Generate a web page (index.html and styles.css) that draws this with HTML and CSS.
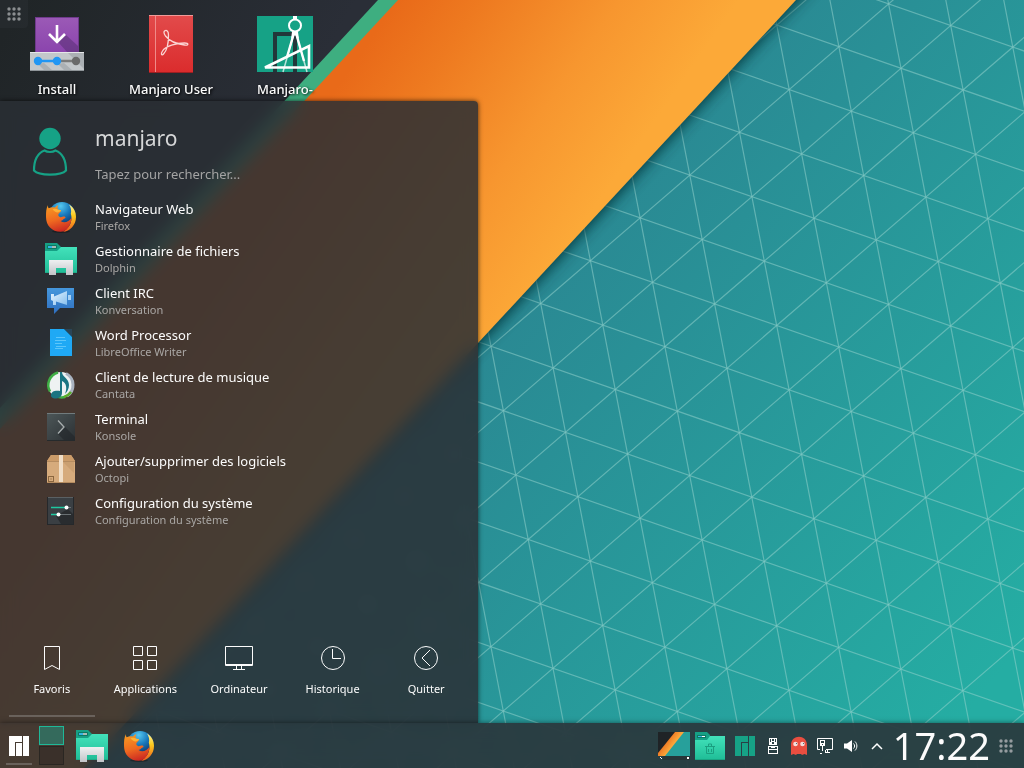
FILE: index.html
```html
<!DOCTYPE html>
<html lang="fr">
<head>
<meta charset="utf-8">
<meta name="viewport" content="width=device-width, initial-scale=1">
<title>Manjaro KDE</title>
<link rel="stylesheet" href="styles.css">
</head>
<body>
<svg class="defs" width="0" height="0" aria-hidden="true">
  <defs>
    <linearGradient id="gFolder" x1="0" y1="0" x2="0" y2="1"><stop offset="0" stop-color="#43e2bb"/><stop offset="1" stop-color="#1fbd97"/></linearGradient>
    <linearGradient id="gPaper" x1="0" y1="0" x2="0" y2="1"><stop offset="0" stop-color="#eef0f1"/><stop offset="1" stop-color="#c2c4c8"/></linearGradient>
    <linearGradient id="gDark" x1="0" y1="0" x2="1" y2="1"><stop offset="0" stop-color="#4c5658"/><stop offset="1" stop-color="#2c3134"/></linearGradient>
    <radialGradient id="gGlobe" cx=".45" cy=".15" r=".8"><stop offset="0" stop-color="#55c8f0"/><stop offset=".45" stop-color="#1878bb"/><stop offset="1" stop-color="#0c2458"/></radialGradient>
    <linearGradient id="gFox" x1=".2" y1="0" x2=".5" y2="1"><stop offset="0" stop-color="#f79a22"/><stop offset=".55" stop-color="#ef6a20"/><stop offset="1" stop-color="#cc2a22"/></linearGradient>
    <linearGradient id="gTail" x1="0" y1="0" x2="0" y2="1"><stop offset="0" stop-color="#fff3a0"/><stop offset=".4" stop-color="#fdcb1e"/><stop offset="1" stop-color="#ee5a1e"/></linearGradient>
    <symbol id="folder" viewBox="0 0 32 32">
      <path fill="#16a085" d="M0 0h12l4 4v5H0z"/>
      <path fill="url(#gFolder)" d="M0 8h12l4-4h16v26H0z"/>
      <path fill="#1fab88" d="M0 29h32v1H0z"/>
      <rect x="2" y="2" width="10" height="4" rx="1" fill="#0d7863"/><rect x="3" y="3" width="4" height="2" fill="#34b6e4"/><rect x="7" y="3" width="4" height="2" fill="#a9bbb4"/>
      <path fill="url(#gPaper)" d="M4 17h24v15h-7v-7h-10v7H4z"/>
    </symbol>
    <symbol id="firefox" viewBox="0 0 32 32">
      <ellipse cx="16" cy="30.500" rx="9" ry="1.500" fill="#000" opacity=".3"/>
      <circle cx="17" cy="14.500" r="13.500" fill="url(#gGlobe)"/>
      <path fill="url(#gTail)" d="M24 3.500c5 3 7 7.500 7 12.500 0 8-6 14.500-13 14.800 5-3 8.500-8 8.500-13.500 0-1.500-.2-3-.7-4.500.9-3 .1-6.500-1.800-9.300z"/>
      <path fill="url(#gFox)" d="M3 4c-.2 1.400.1 2.500.7 3.300C6 6 8 6 10 6.500c1-1.200 2-1.900 3.400-2.300-.9 1.200-1 2.800-.5 4.200 1 .5 2.700.4 3.200.9.200 1.600-2.500 2.800-2.800 4.500-.1 1.200.8 2 2.200 2.400 1.400.3 3.200-1.300 4.700-.3.700.6.300 1.200-.6 1.500-1.600.6-1.900 2.200-4 2.600 3.400 2.600 8.400.8 11.100-3.500C26 24 22 30.800 15.500 30.800 7 30.800 1 24.500 1 16 1 11 1 7.500 3 4z"/>
      <path fill="#ffc23d" d="M7.500 8.500c1.500-1.200 3.500-.8 5.400-.1 1 .5 2.700.4 3.200.9-.5 1.400-2.200 2-3.500 2.300-2-.2-3.600-1.800-5.100-3.100z" opacity=".75"/>
    </symbol>
    <symbol id="manjaro" viewBox="0 0 20 20"><path d="M0 0h13v6H6v14H0zM7 7h6v13H7zM14 0h6v20h-6z"/></symbol>
    <symbol id="grip" viewBox="0 0 14 14"><circle cx="2" cy="2" r="1.700"/><circle cx="7" cy="2" r="1.700"/><circle cx="12" cy="2" r="1.700"/><circle cx="2" cy="7" r="1.700"/><circle cx="7" cy="7" r="1.700"/><circle cx="12" cy="7" r="1.700"/><circle cx="2" cy="12" r="1.700"/><circle cx="7" cy="12" r="1.700"/><circle cx="12" cy="12" r="1.700"/></symbol>
  </defs>
</svg>

<svg class="wallpaper" viewBox="0 0 1024 768" preserveAspectRatio="xMinYMin slice" aria-hidden="true">
  <defs>
    <linearGradient id="wTeal" gradientUnits="userSpaceOnUse" x1="500" y1="330" x2="970" y2="710"><stop offset="0" stop-color="#2a8993"/><stop offset="1" stop-color="#25ada3"/></linearGradient>
    <linearGradient id="wOrange" gradientUnits="userSpaceOnUse" x1="370" y1="40" x2="600" y2="200"><stop offset="0" stop-color="#e96a19"/><stop offset=".25" stop-color="#ee7a20"/><stop offset=".65" stop-color="#f7962f"/><stop offset="1" stop-color="#fca938"/></linearGradient>
    <linearGradient id="wDark" gradientUnits="userSpaceOnUse" x1="0" y1="40" x2="260" y2="180"><stop offset="0" stop-color="#202527"/><stop offset="1" stop-color="#2a2e37"/></linearGradient>
    <filter id="soft" x="-10%" y="-10%" width="120%" height="120%"><feGaussianBlur stdDeviation="7"/></filter>
  </defs>
  <rect width="1024" height="768" fill="url(#wTeal)"/>
  <g transform="matrix(62.1 21.6 12.4 64.4 838.9 46.7)">
    <path class="mesh" d="M-14-6V20M-13-6V20M-12-6V20M-11-6V20M-10-6V20M-9-6V20M-8-6V20M-7-6V20M-6-6V20M-5-6V20M-4-6V20M-3-6V20M-2-6V20M-1-6V20M0-6V20M1-6V20M2-6V20M3-6V20M4-6V20M-16-4H8M-16-3H8M-16-2H8M-16-1H8M-16 0H8M-16 1H8M-16 2H8M-16 3H8M-16 4H8M-16 5H8M-16 6H8M-16 7H8M-16 8H8M-16 9H8M-16 10H8M-16 11H8M-16 12H8M-16 13H8M-16 14H8M-16 15H8"/>
    <path class="mesh" d="M-16 15L6-7M-16 16L6-6M-16 17L6-5M-16 18L6-4M-16 19L6-3M-16 20L6-2M-16 21L6-1M-16 22L6 0M-16 23L6 1M-16 24L6 2M-16 25L6 3M-16 26L6 4M-16 27L6 5M-16 28L6 6M-16 29L6 7M-16 14L6-8"/>
  </g>
  <path d="M-20-20H818L88 768H-20z" fill="#04343a" opacity=".9" filter="url(#soft)"/>
  <path d="M0 0H796L84 768H0z" fill="url(#wOrange)"/>
  <path d="M0 0H398L0 429z" fill="#3eae80"/>
  <path d="M0 0H378L0 408z" fill="url(#wDark)"/>
</svg>

<main class="desktop">
  <button class="toolbox" aria-label="Boîte à outils du bureau"><svg width="14" height="14"><use href="#grip"/></svg></button>
  <ul class="shortcuts">
    <li><a href="#">
      <svg viewBox="0 0 58 58">
        <defs><linearGradient id="iP" x1="0" y1="0" x2="0" y2="1"><stop offset="0" stop-color="#9b59b6"/><stop offset="1" stop-color="#8a44ad"/></linearGradient></defs>
        <rect x="7" y="2" width="44" height="36" fill="#6f3a8c"/><rect x="8" y="3" width="42" height="35" fill="url(#iP)"/>
        <path d="M38 20l12 11v7H40L30 27z" fill="#4b2a66" opacity=".45"/>
        <rect x="2" y="37" width="54" height="19" fill="#c3c7ca"/><path d="M2 37h54v1H2z" fill="#e4e6e8"/><path d="M2 55h54v1H2z" fill="#8f9599"/>
        <path d="M10 49l6 6h8l-8-7zM30 49l6 6h8l-8-7zM40 38l16 16V38z" fill="#7f878b" opacity=".35"/>
        <path d="M29 46h19" stroke="#7b7b7b" stroke-width="2.500"/><path d="M10 46h19" stroke="#2196f3" stroke-width="2.500"/>
        <circle cx="10" cy="46" r="4.200" fill="#2196f3"/><circle cx="29" cy="46" r="4.200" fill="#2196f3"/><circle cx="48" cy="46" r="4.200" fill="#6a6a6a"/>
        <path d="M29 10v16M21 19l8 8 8-8" fill="none" stroke="#fff" stroke-width="2.600"/>
      </svg><span>Install</span></a></li>
    <li><a href="#">
      <svg viewBox="0 0 58 58">
        <defs><linearGradient id="iR" x1="0" y1="0" x2="0" y2="1"><stop offset="0" stop-color="#e24b4b"/><stop offset="1" stop-color="#db2c2d"/></linearGradient></defs>
        <rect x="7" width="44" height="58" fill="#9e1f22"/><rect x="7" width="44" height="57" fill="url(#iR)"/><path d="M7 0h44v1H7z" fill="#f19a98"/><path d="M13.500 1v56" stroke="#f08a88"/>
        <path d="M22.500 16c2-1.500 4 0 4 4 0 6-1 15-5 19-2 2-3 0-1-3 3-5 14-8 22-8 5 0 4 3 0 2-8-1-15-4-19-9-2-3-2-4-1-5z" fill="none" stroke="#fbd5d4" stroke-width="1.300"/>
      </svg><span>Manjaro User</span></a></li>
    <li><a href="#">
      <svg viewBox="0 0 58 58">
        <rect x="1" y="1" width="56" height="56" fill="#16a286"/>
        <path d="M17 17h20v4H21v36h-4zM37 17h4v40h-4z" fill="#22373a"/>
        <path d="M9 52.500L53 31v21.500z" fill="none" stroke="#fff" stroke-width="2.600"/>
        <path d="M39 1v4" stroke="#fff" stroke-width="4"/>
        <circle cx="39" cy="10.500" r="6" fill="none" stroke="#fff" stroke-width="2"/>
        <path d="M38 18L27 57M40 18l11 39" stroke="#fff" stroke-width="1.500" opacity=".7"/>
        <path d="M38 18l-7 24M40 18l8 28" stroke="#fff" stroke-width="2.400"/><path d="M36 17h6l1 7-4-4-4 4z" fill="#fff"/>
      </svg><span>Manjaro-</span></a></li>
  </ul>

  <section class="menu" aria-label="Menu des applications">
    <header class="user">
      <svg class="avatar" viewBox="0 0 40 50"><circle cx="20" cy="11.500" r="10.700" fill="#16a286"/><path d="M14.500 23.500C8 26 4 31 4 43.500c5 5.500 27 5.500 32 0 0-12.500-4-17.500-10.500-20-3 2-8 2-11 0z" fill="none" stroke="#16a286" stroke-width="2.200"/></svg>
      <div class="identity">
        <h1>manjaro</h1>
        <input type="search" aria-label="Rechercher" placeholder="Tapez pour rechercher...">
      </div>
    </header>
    <ul class="apps">
      <li><a href="#"><svg viewBox="0 0 32 32"><use href="#firefox" width="32" height="32"/></svg><span><b>Navigateur Web</b><small>Firefox</small></span></a></li>
      <li><a href="#"><svg viewBox="0 0 32 32"><use href="#folder" width="32" height="32"/></svg><span><b>Gestionnaire de fichiers</b><small>Dolphin</small></span></a></li>
      <li><a href="#"><svg viewBox="0 0 32 32"><defs><linearGradient id="iB" x1="0" y1="0" x2="0" y2="1"><stop offset="0" stop-color="#4597dc"/><stop offset="1" stop-color="#2f6fc0"/></linearGradient><linearGradient id="iH" x1="0" y1="0" x2="1" y2="1"><stop offset="0" stop-color="#e9f5ff"/><stop offset="1" stop-color="#86bfee"/></linearGradient></defs><path d="M2 3h27v20H15l-6 6v-6H2z" fill="url(#iB)"/><path d="M6 9h3v2.500L22 6v14L11 16.500V20H8v-4l-2-1z" fill="url(#iH)"/><path d="M23 10h3v5h-3z" fill="#a9d2f5"/></svg><span><b>Client IRC</b><small>Konversation</small></span></a></li>
      <li><a href="#"><svg viewBox="0 0 32 32"><path d="M5 2h15l7 7v20H5z" fill="#1fa9f5"/><path d="M19 2h8v8z" fill="#2a4658"/><path d="M19 2l8 8" stroke="#16719f"/><path d="M11 10.500h9M10 13.500h11M10 16.500h7M11 19.500h10M10 21.500h8" stroke="#5cc6fb"/></svg><span><b>Word Processor</b><small>LibreOffice Writer</small></span></a></li>
      <li><a href="#"><svg viewBox="0 0 32 32"><circle cx="16" cy="16" r="13" fill="#eef2f2"/><path d="M13 3.500a13 13 0 0 0-8 19M20 28a13 13 0 0 1-9-1" fill="none" stroke="#3fae45" stroke-width="2.500"/><path d="M21 4.500a13 13 0 0 1 1 22.500" fill="none" stroke="#a9b3c0" stroke-width="3"/><path d="M19 28a13 13 0 0 0 7-5" fill="none" stroke="#5cae2a" stroke-width="2.500"/><path d="M15 3h2c0 5 7 6 7 13 0 4-2 7-4 9 2-5 2-11-3-13v12c0 7-12 7-11 2 0-4 5-5 9-4z" fill="#1a7481"/></svg><span><b>Client de lecture de musique</b><small>Cantata</small></span></a></li>
      <li><a href="#"><svg viewBox="0 0 32 32"><rect x="2" y="2" width="28" height="28" fill="#252a2c"/><rect x="2" y="3" width="28" height="26" fill="url(#gDark)"/><path d="M2 2.500h28" stroke="#717b7d"/><path d="M20 16l10 10v3H19l-6-6z" fill="#1d2225" opacity=".5"/><path d="M13 9.500l6 6.500-6 6.500" fill="none" stroke="#a7adae" stroke-width="1.300"/></svg><span><b>Terminal</b><small>Konsole</small></span></a></li>
      <li><a href="#"><svg viewBox="0 0 32 32"><path d="M6 2h20l4 6v22H2V8z" fill="#d6ab7c"/><path d="M6 2h20l4 6H2z" fill="#cc9c69"/><path d="M18 9l11 11V9z" fill="#a97a4b" opacity=".25"/><path d="M2 8.500h28M2 29.500h28" stroke="#b58c60"/><path d="M14 2h4v27h-4z" fill="#f1dfc8"/><rect x="3.500" y="23.500" width="5" height="5" fill="none" stroke="#77552f" opacity=".8"/><rect x="5.500" y="25.500" width="1" height="1" fill="#77552f"/></svg><span><b>Ajouter/supprimer des logiciels</b><small>Octopi</small></span></a></li>
      <li><a href="#"><svg viewBox="0 0 32 32"><rect x="2" y="2" width="27" height="28" fill="#25282b"/><rect x="3" y="3" width="25" height="26" fill="#3a3f43"/><path d="M3 2.500h25" stroke="#5a6063"/><path d="M23 14l5 5v10H16l-5-8z" fill="#17191b" opacity=".5"/><path d="M6 12.500h14M6 19.500h7" stroke="#1fc8a0" stroke-width="1.500"/><path d="M20 12.500h6M13 19.500h13" stroke="#697073"/><circle cx="21.500" cy="12.500" r="2" fill="#fff"/><circle cx="13.500" cy="19.500" r="2" fill="#fff"/></svg><span><b>Configuration du système</b><small>Configuration du système</small></span></a></li>
    </ul>
    <nav class="tabs">
      <button class="current"><svg viewBox="0 0 28 28"><path d="M6.500 2.500h15v23l-7.500-4-7.500 4z"/></svg>Favoris</button>
      <button><svg viewBox="0 0 28 28"><path d="M2.500 2.500h9v9h-9zM16.500 2.500h9v9h-9zM2.500 16.500h9v9h-9zM16.500 16.500h9v9h-9z"/></svg>Applications</button>
      <button><svg viewBox="0 0 28 28"><path d="M.5 2.500h27v19H.5zM.5 20.500h27M11.500 22v3.500M16.500 22v3.500M8 25.500h12"/></svg>Ordinateur</button>
      <button><svg viewBox="0 0 28 28"><circle cx="14" cy="14" r="11.500"/><path d="M13.500 5v9.500H22"/></svg>Historique</button>
      <button><svg viewBox="0 0 28 28"><circle cx="14" cy="14" r="11.500"/><path d="M18 6l-8 8 8 8"/></svg>Quitter</button>
    </nav>
  </section>
</main>

<footer class="taskbar">
  <button class="launcher" aria-label="Lanceur d'applications"><svg width="20" height="20"><use href="#manjaro"/></svg></button>
  <div class="pager"><button class="active" aria-label="Bureau 1"></button><button aria-label="Bureau 2"></button></div>
  <div class="tasks">
    <button aria-label="Dolphin"><svg width="32" height="32"><use href="#folder"/></svg></button>
    <button aria-label="Firefox"><svg width="32" height="32"><use href="#firefox"/></svg></button>
  </div>
  <div class="tray">
    <button aria-label="Afficher le bureau"><svg width="32" height="28" viewBox="0 0 32 28"><defs><linearGradient id="tO" gradientUnits="userSpaceOnUse" x1="6" y1="8" x2="14" y2="14"><stop offset="0" stop-color="#e8651a"/><stop offset="1" stop-color="#fba63a"/></linearGradient></defs><path fill="#27a09b" d="M0 0h32v24H0z"/><path fill="url(#tO)" d="M0 0h26L7 24H0z"/><path fill="#1f2326" d="M0 0h17L0 21z"/><path fill="#273639" d="M5 24h27v4H5z"/><path fill="#fff" d="M2 25h1v1H2zM3 26h1v1H3zM29 25h2v2h-2z"/></svg></button>
    <button class="bin" aria-label="Corbeille"><svg width="30" height="28" viewBox="0 0 30 28"><path fill="#16a085" d="M0 0h12l3 3v6H0z"/><path fill="url(#gFolder)" d="M0 8h12l3-4h15v24H0z"/><path fill="#1aa583" d="M0 27h30v1H0z"/><path fill="#0d7863" d="M2 3h9v3H2z"/><path fill="#3dbce9" d="M3 4h4v1H3z"/><path fill="#fff" d="M7 4h3v1H7z"/><path d="M10 14.500h10M13.500 14v-2h3v2M11.500 15v6.500h7V15M13.500 17v3M16.500 17v3" fill="none" stroke="#1a9f80"/></svg></button>
    <button class="green" aria-label="Manjaro"><svg width="20" height="20"><use href="#manjaro"/></svg></button>
    <button aria-label="Périphériques"><svg width="16" height="16" viewBox="0 0 16 16"><path fill="#fff" fill-rule="evenodd" d="M4 0h8v7H4zM5 1v3h1V1zM7 1v2h2V1zM10 1v3h1V1zM7 4v2h2V4zM3 8h10v8H3zM4 9v2h8V9zM4 12v3h8v-3z"/><path fill="#fff" d="M6 9h4v1H6zM4 11h8v1H4z"/></svg></button>
    <button aria-label="Mises à jour"><svg width="16" height="20" viewBox="0 0 16 20"><path fill="#e94e40" d="M0 19V9C0-2 16-2 16 9v10l-2.500-1-2.500 1-1-1H6l-1 1-2.500-1z"/><circle cx="4.500" cy="8" r="2.300" fill="#f4dcda"/><circle cx="11.500" cy="8" r="2.300" fill="#f4dcda"/><path fill="#4d6a70" d="M5 7h1v1H5zM12 7h1v1h-1z"/></svg></button>
    <button aria-label="Réseau"><svg width="16" height="16" viewBox="0 0 16 16"><path d="M3 11.500H.500V.500h15v11H9M8 14.500h5M10.500 12v2M5.500 7v6M3 15.500h2M8.500 12v2" fill="none" stroke="#fff"/><path fill="#fff" fill-rule="evenodd" d="M3 2h5v6H3zM4 3v2h3V3zM5 6v1h1V6z"/></svg></button>
    <button aria-label="Volume"><svg width="16" height="16" viewBox="0 0 16 16"><path fill="#fff" d="M1 5.500h3L9 2v12l-5-3.500H1z"/><path d="M10.500 5.500c1.500 1.500 1.500 3.500 0 5M12 3.500c2.500 2.500 2.500 6.500 0 9" fill="none" stroke="#fff"/></svg></button>
    <button aria-label="Afficher les icônes cachées"><svg width="16" height="16" viewBox="0 0 16 16"><path d="M3 11l5-5 5 5" fill="none" stroke="#fff" stroke-width="1.500"/></svg></button>
  </div>
  <time class="clock" datetime="17:22">17:22</time>
  <button class="handle" aria-label="Options du tableau de bord"><svg width="14" height="14"><use href="#grip"/></svg></button>
</footer>
</body>
</html>
```
FILE: styles.css
```css
:root {
  --panel: rgba(42, 46, 52, .86);
  --accent: #16a286;
}

* { box-sizing: border-box; }

body {
  margin: 0;
  min-height: 100vh;
  display: flex;
  flex-direction: column;
  overflow: hidden;
  background: #2a8993;
  color: #fcfcfc;
  font: 13px/18px "Noto Sans", sans-serif;
}

ul { list-style: none; margin: 0; padding: 0; }
a { color: inherit; text-decoration: none; }
svg { display: block; }
.defs { position: absolute; }

button {
  padding: 0;
  border: 0;
  background: none;
  color: inherit;
  font: inherit;
}

.wallpaper {
  position: fixed;
  inset: 0;
  width: 100%;
  height: 100%;
  z-index: -1;
}

.mesh {
  fill: none;
  stroke: rgba(150, 210, 205, .52);
  stroke-width: 1.2px;
  vector-effect: non-scaling-stroke;
}

.desktop {
  position: relative;
  flex: 1;
  display: flex;
  flex-direction: column;
}

.toolbox {
  position: absolute;
  top: 0;
  left: 0;
  padding: 7px;
  border-radius: 0 0 4px 0;
  background: rgba(42, 46, 50, .6);
  fill: #8b8e90;
}

.shortcuts { display: flex; padding-top: 15px; }

.shortcuts a {
  width: 114px;
  height: 86px;
  display: flex;
  flex-direction: column;
  align-items: center;
  gap: 6px;
  line-height: 20px;
  font-weight: 500;
  text-shadow: 1px 1px 3px #000;
}

.shortcuts svg { width: 58px; height: 58px; }

.menu {
  flex: 1;
  width: 100%;
  max-width: 478px;
  display: flex;
  flex-direction: column;
  border-radius: 0 4px 0 0;
  background: var(--panel);
  backdrop-filter: blur(8px);
  box-shadow: 0 0 5px rgba(0, 0, 0, .7);
}

.user {
  display: flex;
  gap: 25px;
  padding: 23px 16px 0 30px;
}

.avatar { width: 40px; height: 50px; margin-top: 3px; }
.identity { flex: 1; }

h1 {
  margin: 0;
  color: #d6d7d8;
  font-size: 21px;
  line-height: 29px;
  font-weight: 400;
}

.identity input {
  display: block;
  width: 100%;
  margin-top: 9px;
  padding: 0;
  border: 0;
  outline: 0;
  background: none;
  color: inherit;
  font: 13px/24px "Noto Sans", sans-serif;
}

.identity input::placeholder { color: #a3a3a3; opacity: 1; }

.apps { flex: 1; padding: 10px 16px 0 45px; }

.apps a {
  display: flex;
  align-items: center;
  gap: 18px;
  height: 42px;
}

.apps svg { width: 32px; height: 32px; }
.apps b, .apps small { display: block; font-weight: 400; }
.apps small { color: #a9a7a5; font-size: 11px; line-height: 16px; }

.tabs {
  display: grid;
  grid-template-columns: repeat(5, 1fr);
  padding: 0 5px 6px;
}

.tabs button {
  display: flex;
  flex-direction: column;
  align-items: center;
  gap: 9px;
  margin: 0 4px;
  padding-bottom: 18px;
  border-bottom: 2px solid transparent;
  font-size: 11px;
  line-height: 16px;
}

.tabs .current { border-color: #6a625c; }

.tabs svg {
  width: 28px;
  height: 28px;
  fill: none;
  stroke: #fcfcfc;
}

.taskbar {
  display: flex;
  align-items: center;
  height: 45px;
  padding: 0 11px 0 6px;
  background: var(--panel);
  backdrop-filter: blur(8px);
  box-shadow: 0 0 5px rgba(0, 0, 0, .5);
}

.launcher {
  align-self: stretch;
  padding: 5px 3px 0;
  border-bottom: 2px solid #6a625c;
  margin-bottom: 3px;
  fill: #fff;
}

.pager {
  display: grid;
  gap: 1px;
  margin-left: 7px;
}

.pager button {
  width: 25px;
  height: 19px;
  border: 1px solid #2a2622;
  background: #3a302a;
}

.pager .active { border-color: #1fb898; background: #346a5c; }

.tasks { display: flex; gap: 15px; margin-left: 12px; }

.tray {
  display: flex;
  align-items: center;
  gap: 10px;
  margin-left: auto;
}

.bin { margin-left: -5px; }
.green { fill: var(--accent); }

.clock {
  margin: 0 9px 0 8px;
  font-size: 38px;
  line-height: 45px;
}

.handle { fill: #969c9f; }
```
